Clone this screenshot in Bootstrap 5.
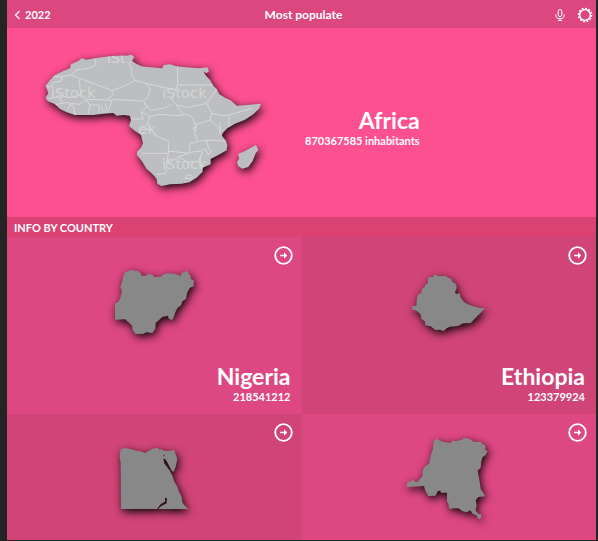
<!DOCTYPE html>
<html lang="en">
<head>
<meta charset="utf-8">
<meta name="viewport" content="width=device-width, initial-scale=1">
<title>Most populate</title>
<link href="https://cdn.jsdelivr.net/npm/bootstrap@5.3.0/dist/css/bootstrap.min.css" rel="stylesheet">
<style>
body { background: #242424; color: #fff; font-family: Lato, "Open Sans", sans-serif; font-size: 11px; line-height: 16px; }
.app-shell { margin: 0 2px 0 7px; border-bottom: 1px solid #242424; }
.app-bar { display: grid; grid-template-columns: 1fr auto 1fr; height: 28px; padding: 1px 3px 0 7px; background: #dd4780; }
.app-bar a { font-weight: 700; }
.app-title { margin: 0; font-size: 12px; line-height: 16px; font-weight: 700; }
.bar-tools { gap: 11px; }
.plain-btn { padding: 0; border: 0; background: none; color: #fff; line-height: 0; }
.hero { height: 189px; background: #fd5091; }
.hero-map { margin-left: 28px; margin-bottom: 5px; }
.hero-text { margin-left: 35px; margin-top: 8px; }
.place-name { font-size: 23px; line-height: 28px; font-weight: 700; margin: 0; }
.count { margin: 0; font-size: 11px; line-height: 14px; font-weight: 700; }
.section-label { height: 20px; padding: 3px 7px 0; margin: 0; background: #dc4174; font-size: 11px; line-height: 16px; font-weight: 700; }
.tile { display: grid; grid-template-rows: minmax(0, 1fr) auto; height: 177px; background: #dd4782; }
.tile-alt { background: #d04477; }
.tile-map { grid-area: 1 / 1; justify-self: center; margin-top: 11px; }
.tile-go { grid-area: 1 / 1; justify-self: end; align-self: start; margin: 9px 9px 0 0; }
.tile-text { padding: 0 11px 10px; }
.land { filter: drop-shadow(5px 9px 12px rgba(0, 0, 0, .95)); }
.borders { fill: none; stroke: #d6d7d9; stroke-width: 3; }
.stamp { fill: #d4d5d7; font-family: "DejaVu Sans", sans-serif; font-size: 44px; }
</style>
<script src="https://cdn.jsdelivr.net/npm/bootstrap@5.3.0/dist/js/bootstrap.bundle.min.js"></script>
</head>
<body>
<svg width="0" height="0" class="position-absolute" aria-hidden="true">
  <symbol id="go" viewBox="0 0 19 19"><circle cx="9.5" cy="9.5" r="8.3" fill="none" stroke="#fff" stroke-width="1.8"/><path d="M6 8.7h4v-2.4l3.2 3.2-3.2 3.2v-2.4H6Z" fill="#fff"/></symbol>
</svg>
<div class="app-shell d-flex flex-column vh-100 overflow-hidden">
  <header class="app-bar align-items-center flex-shrink-0">
    <a href="#" class="d-flex align-items-center text-white text-decoration-none">
      <svg width="7" height="10" viewBox="0 0 7 10" class="me-1" aria-hidden="true"><path d="M5.5 1 1.5 5l4 4" fill="none" stroke="#fff" stroke-width="1.2"/></svg>2022</a>
    <h1 class="app-title">Most populate</h1>
    <div class="bar-tools d-flex justify-content-end align-items-center">
      <button type="button" class="plain-btn" aria-label="Voice"><svg width="12" height="12" viewBox="0 0 12 12" fill="none" stroke="#fff"><rect x="4.2" y=".6" width="3.6" height="7" rx="1.8"/><path d="M1.8 5.5v.5a4.2 3.7 0 0 0 8.4 0v-.5M6 9.8v1.7M4 11.5h4"/></svg></button>
      <button type="button" class="plain-btn" aria-label="Settings"><svg width="16" height="16" viewBox="0 0 16 16" fill="none" stroke="#fff"><circle cx="8" cy="8" r="5.4" stroke-width="1.5"/><circle cx="8" cy="8" r="6.6" stroke-width="1.5" stroke-dasharray="1.8 1.656"/></svg></button>
    </div>
  </header>
  <section class="hero d-flex align-items-center flex-shrink-0">
    <svg class="hero-map" width="235" height="150" viewBox="0 0 705 450" overflow="visible" role="img" aria-label="Map of Africa">
      <clipPath id="inside"><use href="#africa"/></clipPath>
      <g class="land" fill="#bcbec0">
        <path id="africa" d="M140 40 155 44 180 40 205 36 240 32 275 32 290 29 298 36 291 48 305 57 320 64 338 66 381 70 387 60 405 58 425 64 445 66 470 68 495 70 517 67 522 78 515 85 505 79 513 92 525 105 535 122 545 132 553 148 570 158 585 165 597 175 605 182 635 180 678 176 673 190 655 208 630 224 600 236 577 250 563 265 561 272 573 288 577 300 575 316 550 330 527 342 527 358 503 368 503 380 485 398 463 412 440 416 405 418 380 423 367 416 365 402 357 392 345 380 335 372 322 350 306 330 306 320 318 308 324 295 318 270 300 258 282 243 288 225 284 212 265 210 245 212 235 204 205 206 175 210 120 210 95 202 75 192 60 178 38 168 32 158 40 145 32 122 45 105 60 90 90 76 105 70 108 58 130 48Z"/>
        <path d="M663 300 670 315 662 325 653 348 640 366 622 371 610 364 606 352 613 340 609 327 630 318 645 310Z"/>
      </g>
      <g clip-path="url(#inside)">
        <path class="borders" d="M180 40 183 60 160 70 125 75 108 90 80 95H48M80 95 80 108 55 112 50 125H32M108 90 232 137V152L215 165 150 163M132 103 138 150 100 158 75 150 60 158 40 160M232 137 275 120 300 106 288 88 290 70 280 55 292 48M300 106 332 115 345 130 340 155 325 168 232 163M75 160 80 175 60 180M80 175 98 172 115 185 120 210M98 195 108 175 135 178 150 163 165 180 160 205M165 180H192V205M198 180 205 203M210 175 215 190 208 204M215 165 232 168 222 190 218 204M332 115 420 135 428 120V64M428 120H535M420 135 410 165 425 180 460 187 515 175 545 132M410 178 385 190 345 196 325 168M325 168 335 185 318 200 325 222 290 222M318 200 345 215 370 208 400 210 430 212 455 207 470 215 485 245 478 262 488 290 465 295 462 325 400 318 402 290 360 270 345 245 318 270M318 250 335 240 345 215M425 180 445 210M515 175 530 205 565 212 582 210 650 190M582 210V245M530 205 525 225 478 240M478 235 486 245 473 250 484 258M525 225 561 258M488 290 515 285 520 310 530 320 520 330 510 310 500 318 465 322M515 285 573 288M322 325 400 325 402 318M400 325 392 385 365 388M462 325 430 335 405 352 392 350M430 335 455 350 490 350 503 320M490 350 503 372M450 400 458 390 472 393 468 402Z"/>
        <g class="stamp"><text x="215" y="53">iSt</text><text x="48" y="160">iStock</text><text x="381" y="160">iStock</text><text x="310" y="267">ek</text><text x="548" y="267">i</text><text x="381" y="373">iStock</text></g>
      </g>
    </svg>
    <div class="hero-text text-end">
      <h2 class="place-name">Africa</h2>
      <p class="count">870367585 inhabitants</p>
    </div>
  </section>
  <h3 class="section-label flex-shrink-0">INFO BY COUNTRY</h3>
  <div class="row g-0">
    <article class="col-6 tile">
      <svg class="tile-map" width="110" height="110" viewBox="-3 -21 330 330" overflow="visible" role="img" aria-label="Map of Nigeria"><path class="land" fill="#888" d="M70 62 75 52 85 48 97 44 104 48 112 47 122 55 125 62 137 62 148 56 157 60 163 66 183 65 187 60 200 55 222 56 235 60 242 62 245 54 262 47 266 56 272 63 273 72 281 76V94L270 98 262 112 258 132 248 138 242 152 233 158 226 172 220 190 214 196 206 190 204 182 187 186 178 194 167 204 166 222 157 234 140 232 128 237 106 236 98 225 96 212 88 204 75 193 45 194V145L52 143 60 132 66 108 61 96 67 78Z"/></svg>
      <button type="button" class="plain-btn tile-go" aria-label="Open Nigeria"><svg width="19" height="19"><use href="#go"/></svg></button>
      <div class="tile-text text-end"><h4 class="place-name">Nigeria</h4><p class="count">218541212</p></div>
    </article>
    <article class="col-6 tile tile-alt">
      <svg class="tile-map" width="110" height="110" viewBox="-18 -36 330 330" overflow="visible" role="img" aria-label="Map of Ethiopia"><path class="land" fill="#888" d="M84 62 86 51 98 52 105 43 114 48 138 48 144 53 153 56 157 65 165 70 170 78 169 88 165 97 168 102 179 100 181 111 192 126 206 134 240 144 255 145 212 189 190 190 174 198 150 200 140 205 131 213 118 209 106 210 92 199 76 196 74 184 64 176 61 162 49 152 36 147V139L49 137 51 114 54 104 64 98 65 87 74 81 77 73 82 72Z"/></svg>
      <button type="button" class="plain-btn tile-go" aria-label="Open Ethiopia"><svg width="19" height="19"><use href="#go"/></svg></button>
      <div class="tile-text text-end"><h4 class="place-name">Ethiopia</h4><p class="count">123379924</p></div>
    </article>
    <article class="col-6 tile tile-alt">
      <svg class="tile-map" width="110" height="110" viewBox="-18 -30 330 330" overflow="visible" role="img" aria-label="Map of Egypt"><path class="land" fill="#888" d="M47 43 60 39 76 42 88 46 105 49 120 54 132 47 143 41 158 39 165 44 170 42 176 47 190 48 207 45 213 60 217 72 212 96 205 111 197 105 190 90 181 73 176 71 178 84 193 104 203 124 207 138 217 155 222 170 230 186 232 202 241 214 251 222H160L167 213 184 204 185 189 180 190V200L168 208 156 222H48L47 84 44 66Z"/><path d="M175 70 185 79 201 109 191 102 178 85ZM175 60h3v4h-3ZM184 187 181 191V200L167 208 157 221 170 212 185 205Z" fill="#35121f"/></svg>
      <button type="button" class="plain-btn tile-go" aria-label="Open Egypt"><svg width="19" height="19"><use href="#go"/></svg></button>
    </article>
    <article class="col-6 tile">
      <svg class="tile-map" width="110" height="110" viewBox="-3 0 330 330" overflow="visible" role="img" aria-label="Map of the Democratic Republic of the Congo"><path class="land" fill="#888" d="M116 47 127 41 136 48 150 52 166 54 172 47 185 48 200 44 207 39 225 42 236 50 257 51 263 58 271 61V75L278 78 272 90 263 96 259 108 257 128 248 137 252 158 255 177 257 192 264 202 270 214 250 216 242 226 245 240 242 257 250 267 259 268 258 279 250 282 245 271 233 266 226 256 215 262 203 259 190 250 176 250 162 251 160 235 156 230V203L138 203 136 197 128 199 122 212 100 213 91 198 87 183 34 186 38 171 48 169 55 163 58 170 68 170 82 154 83 137 90 124 102 116 108 88 113 75Z"/></svg>
      <button type="button" class="plain-btn tile-go" aria-label="Open Democratic Republic of the Congo"><svg width="19" height="19"><use href="#go"/></svg></button>
    </article>
  </div>
</div>
</body>
</html>
